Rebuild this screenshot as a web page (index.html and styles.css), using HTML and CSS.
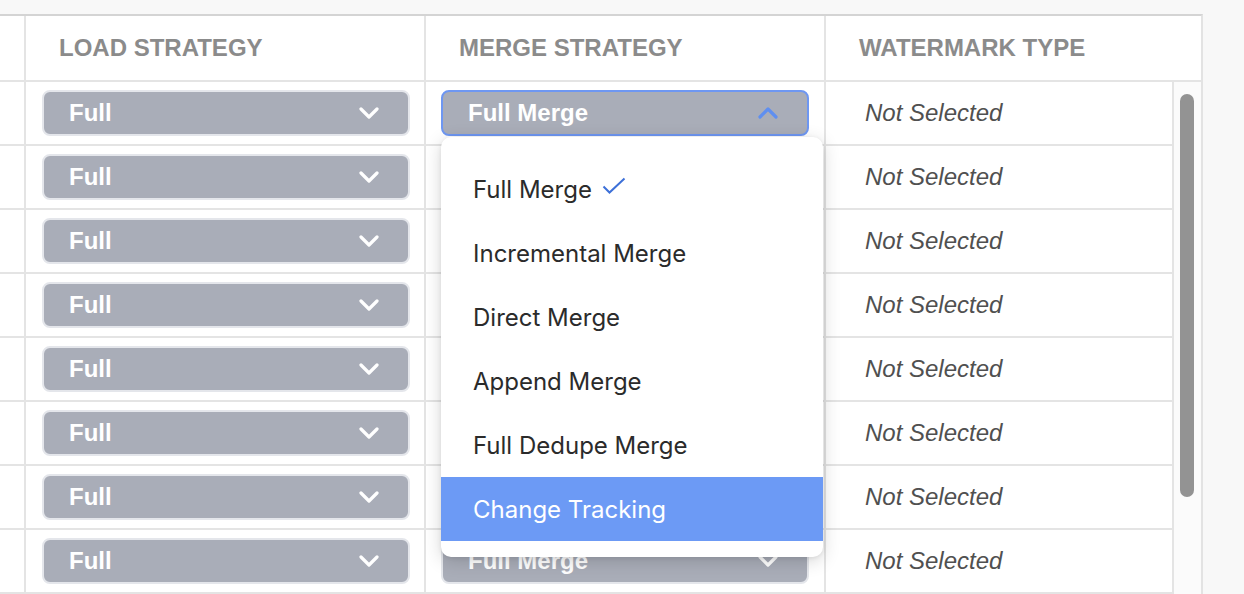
FILE: index.html
```html
<!DOCTYPE html>
<html>
<head>
<meta charset="utf-8">
<link rel="stylesheet" href="styles.css">
</head>
<body>
<div class="page">
  <div class="table">
    <div class="head">
      <div class="hcell hcell-first"></div>
      <div class="hcell">LOAD STRATEGY</div>
      <div class="hcell">MERGE STRATEGY</div>
      <div class="hcell hcell-last">WATERMARK TYPE</div>
    </div>
    <div class="body">
      <div class="rows" id="rows">
        <div class="row">
          <div class="cell cell-first"></div>
          <div class="cell cell-btn cell-load">
            <div class="select"><span>Full</span><svg class="chev" width="20" height="12" viewBox="0 0 20 12"><path d="M2 2 L10 10 L18 2" fill="none" stroke="#fff" stroke-width="3.2" stroke-linecap="round" stroke-linejoin="round"/></svg></div>
          </div>
          <div class="cell cell-btn cell-merge">
            <div class="dropdown">
              <div class="select select-open"><span>Full Merge</span><svg class="chev" width="20" height="12" viewBox="0 0 20 12"><path d="M2 10 L10 2 L18 10" fill="none" stroke="#5f8ff0" stroke-width="3.2" stroke-linecap="round" stroke-linejoin="round"/></svg></div>
              <div class="menu">
                <div class="item">Full Merge<svg class="check" width="24" height="18" viewBox="0 0 24 18"><path d="M1.5 9.5 L7.5 15.5 L22.5 1.5" fill="none" stroke="#3d70d8" stroke-width="2"/></svg></div>
                <div class="item">Incremental Merge</div>
                <div class="item">Direct Merge</div>
                <div class="item">Append Merge</div>
                <div class="item">Full Dedupe Merge</div>
                <div class="item item-active">Change Tracking</div>
              </div>
            </div>
          </div>
          <div class="cell cell-text">Not Selected</div>
        </div>
      </div>
      <div class="track"><div class="thumb"></div></div>
    </div>
  </div>
</div>
<script src="app.js"></script>
</body>
</html>
```
FILE: app.js
```js
(function () {
  var rows = document.getElementById('rows');
  var chevDown = '<svg class="chev" width="20" height="12" viewBox="0 0 20 12"><path d="M2 2 L10 10 L18 2" fill="none" stroke="#fff" stroke-width="3.2" stroke-linecap="round" stroke-linejoin="round"/></svg>';
  for (var i = 0; i < 7; i++) {
    var last = i === 6;
    var r = document.createElement('div');
    r.className = 'row';
    var merge = last
      ? '<div class="select"><span>Full Merge</span>' + chevDown + '</div>'
      : '<div class="select"></div>';
    r.innerHTML =
      '<div class="cell cell-first"></div>' +
      '<div class="cell cell-btn cell-load"><div class="select"><span>Full</span>' + chevDown + '</div></div>' +
      '<div class="cell cell-btn cell-merge">' + merge + '</div>' +
      '<div class="cell cell-text">Not Selected</div>';
    rows.appendChild(r);
  }
})();
```
FILE: styles.css
```css
* { box-sizing: border-box; }
html, body { margin: 0; padding: 0; }
body {
  background: #f8f8f8;
  font-family: "Liberation Sans", Arial, sans-serif;
  width: 1244px;
  height: 594px;
  overflow: hidden;
}
.page { padding-top: 14px; }
.table {
  width: 1203px;
  background: #fff;
  border-top: 2px solid #d4d4d4;
  border-right: 2px solid #e3e3e3;
}
.head {
  display: grid;
  grid-template-columns: 26px 400px 400px 1fr;
  height: 66px;
  border-bottom: 2px solid #e4e4e4;
}
.hcell {
  border-right: 2px solid #e4e4e4;
  display: flex;
  align-items: center;
  padding-left: 33px;
  font-size: 24px;
  font-weight: bold;
  color: #8b8b8b;
}
.hcell-first { padding-left: 0; }
.hcell-last { border-right: none; }
.body { display: flex; }
.rows { width: 1172px; }
.row {
  display: grid;
  grid-template-columns: 26px 400px 400px 1fr;
  height: 64px;
  border-bottom: 2px solid #e4e4e4;
}
.cell {
  border-right: 2px solid #e4e4e4;
  display: flex;
  align-items: center;
}
.cell-text {
  border-right: none;
  padding-left: 39px;
  font-size: 24px;
  font-style: italic;
  color: #505050;
}
.cell-load { padding: 0 14px 0 16px; }
.cell-merge { padding: 0 15px 0 15px; }
.dropdown {
  position: relative;
  width: 100%;
}
.select {
  width: 100%;
  height: 46px;
  border: 2px solid #e4e6eb;
  border-radius: 8px;
  background: #a9adb8;
  display: flex;
  align-items: center;
  justify-content: space-between;
  padding: 0 29px 0 25px;
  color: #fff;
  font-size: 24px;
  font-weight: bold;
}
.select-open { border-color: #6e97f2; }
.chev { display: block; }
.menu {
  position: absolute;
  left: 0;
  top: calc(100% + 1px);
  width: 382px;
  background: #fff;
  border-radius: 10px;
  padding: 20px 0 16px;
  box-shadow: 0 4px 18px rgba(0, 0, 0, 0.16), 0 1px 4px rgba(0, 0, 0, 0.08);
  z-index: 10;
}
.item {
  height: 64px;
  display: flex;
  align-items: center;
  padding-left: 32px;
  font-family: Inter, "Noto Sans", sans-serif;
  font-size: 24px;
  color: #2b2b2b;
}
.item-active {
  background: #6c9af5;
  color: #fff;
}
.check { margin-left: 10px; margin-top: -6px; }
.track {
  width: 29px;
  border-left: 2px solid #e4e4e4;
  background: #fbfbfb;
  padding: 12px 0 0 6px;
}
.thumb {
  width: 14px;
  height: 403px;
  border-radius: 7px;
  background: #939393;
}
```
